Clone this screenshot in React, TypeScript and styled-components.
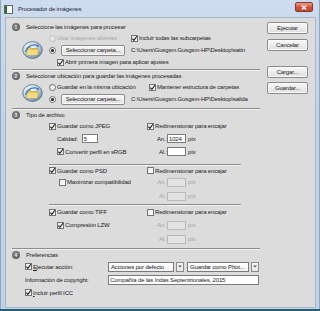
import styled, { createGlobalStyle } from 'styled-components';

const GlobalStyle = createGlobalStyle`
  html, body {
    margin: 0;
    padding: 0;
    background: #245f76;
  }
  body {
    width: 320px;
    height: 311px;
    overflow: hidden;
    font-family: 'Liberation Sans', Arial, sans-serif;
    font-size: 6px;
    letter-spacing: -0.15px;
    color: #1b1b1b;
  }
`;

// pieces

const FolderIcon = () => (
    <svg width="21" height="18" viewBox="0 0 21 18">
        <defs>
            <radialGradient id="globe" cx="40%" cy="35%" r="70%">
                <stop offset="0" stopColor="#ffffff" />
                <stop offset="0.55" stopColor="#c9d8e6" />
                <stop offset="1" stopColor="#5f7f9f" />
            </radialGradient>
        </defs>
        <ellipse cx="10.5" cy="9" rx="9.8" ry="8.4" fill="url(#globe)" stroke="#56708c" strokeWidth="0.8" />
        <path d="M5 6.5 L9 6.5 L10 7.6 L16 7.6 L16 14 L5 14 Z" fill="#e9c252" stroke="#a58424" strokeWidth="0.5" />
        <path d="M5.6 8.8 L16 8.8 L15.2 14 L5 14 Z" fill="#f6dc80" />
        <path d="M3.5 11 C6 4 12 2.5 16.5 5" fill="none" stroke="#3b7fc0" strokeWidth="1.4" />
        <path d="M15 3.4 L17.6 5.3 L14.8 6.4 Z" fill="#3b7fc0" />
    </svg>
);

const Check = () => (
    <svg width="7" height="7" viewBox="0 0 7 7">
        <path d="M1.3 3.6 L2.9 5.3 L5.9 1.2" fill="none" stroke="#1d1d1d" strokeWidth="1.1" />
    </svg>
);

interface BoxProps {
    checked?: boolean;
    disabled?: boolean;
    children?: React.ReactNode;
}

const CheckItem = ({ checked, disabled, children }: BoxProps) => (
    <Item $disabled={disabled}>
        <Box $disabled={disabled}>{checked && <Check />}</Box>
        {children && <span>{children}</span>}
    </Item>
);

const RadioItem = ({ checked, disabled, children }: BoxProps) => (
    <Item $disabled={disabled}>
        <Radio $disabled={disabled}>{checked && <Dot />}</Radio>
        {children && <span>{children}</span>}
    </Item>
);

const SizeField = ({ label, value, disabled }: { label: string; value?: string; disabled?: boolean }) => (
    <Row $disabled={disabled}>
        <SizeLabel>{label}</SizeLabel>
        <Input $w={19} $disabled={disabled}>{value}</Input>
        <Unit>píx</Unit>
    </Row>
);

const Dropdown = ({ text, width }: { text: string; width: number }) => (
    <DropWrap>
        <Select $w={width}>{text}</Select>
        <Arrow>
            <svg width="4" height="3" viewBox="0 0 4 3">
                <path d="M0 0.5 L4 0.5 L2 2.6 Z" fill="#555" />
            </svg>
        </Arrow>
    </DropWrap>
);

const App = () => {
    return (
        <>
            <GlobalStyle />
            <Window>
                <TitleBar>
                    <AppIcon />
                    <Title>Procesador de imágenes</Title>
                    <Close>
                        <svg width="6" height="5" viewBox="0 0 6 5">
                            <path d="M0.8 0.6 L5.2 4.4 M5.2 0.6 L0.8 4.4" stroke="#fff" strokeWidth="1.3" />
                        </svg>
                    </Close>
                </TitleBar>

                <Body>
                    <Main>
                        {/* 1 */}
                        <SectionHead>
                            <Num>1</Num>
                            <span>Seleccione las imágenes para procesar</span>
                        </SectionHead>
                        <PickGrid $rows="12px 12px 12px">
                            <IconCell>
                                <FolderIcon />
                            </IconCell>
                            <Row>
                                <Fixed $w={82}>
                                    <RadioItem disabled>Usar imágenes abiertas</RadioItem>
                                </Fixed>
                                <CheckItem checked>Incluir todas las subcarpetas</CheckItem>
                            </Row>
                            <Row>
                                <RadioItem checked />
                                <Button $w={64} $ml={5}>Seleccionar carpeta...</Button>
                                <Path>C:\Users\Gusgsm.Gusgsm-HP\Desktop\satin</Path>
                            </Row>
                            <Row $indent={8}>
                                <CheckItem checked>Abrir primera imagen para aplicar ajustes</CheckItem>
                            </Row>
                        </PickGrid>
                        <Separator $mt={1} />

                        {/* 2 */}
                        <SectionHead>
                            <Num>2</Num>
                            <span>Seleccionar ubicación para guardar las imágenes procesadas</span>
                        </SectionHead>
                        <PickGrid $rows="12px 12px">
                            <IconCell>
                                <FolderIcon />
                            </IconCell>
                            <Row>
                                <Fixed $w={100}>
                                    <RadioItem>Guardar en la misma ubicación</RadioItem>
                                </Fixed>
                                <CheckItem checked>Mantener estructura de carpetas</CheckItem>
                            </Row>
                            <Row>
                                <RadioItem checked />
                                <Button $w={64} $ml={5}>Seleccionar carpeta...</Button>
                                <Path>C:\Users\Gusgsm.Gusgsm-HP\Desktop\salida</Path>
                            </Row>
                        </PickGrid>
                        <Separator $mt={3} />

                        {/* 3 */}
                        <SectionHead>
                            <Num>3</Num>
                            <span>Tipo de archivo</span>
                        </SectionHead>
                        <FileBlock $rows="12px 13px 13px">
                            <Row>
                                <CheckItem checked>Guardar como JPEG</CheckItem>
                            </Row>
                            <Row>
                                <CheckItem checked>Redimensionar para encajar</CheckItem>
                            </Row>
                            <Row $indent={8}>
                                <span>Calidad:</span>
                                <Input $w={16} $ml={4}>5</Input>
                            </Row>
                            <SizeField label="An.:" value="1024" />
                            <Row $indent={8}>
                                <CheckItem checked>Convertir perfil en sRGB</CheckItem>
                            </Row>
                            <SizeField label="Al.:" />
                        </FileBlock>
                        <SubSeparator $mt={6} />

                        <FileBlock $rows="9px 14px 14px">
                            <Row>
                                <CheckItem checked>Guardar como PSD</CheckItem>
                            </Row>
                            <Row>
                                <CheckItem>Redimensionar para encajar</CheckItem>
                            </Row>
                            <Row $indent={10}>
                                <CheckItem>Maximizar compatibilidad</CheckItem>
                            </Row>
                            <SizeField label="An.:" disabled />
                            <span />
                            <SizeField label="Al.:" disabled />
                        </FileBlock>
                        <SubSeparator $mt={1} />

                        <FileBlock $rows="12px 14px 14px">
                            <Row>
                                <CheckItem checked>Guardar como TIFF</CheckItem>
                            </Row>
                            <Row>
                                <CheckItem>Redimensionar para encajar</CheckItem>
                            </Row>
                            <Row $indent={8}>
                                <CheckItem checked>Compresión LZW</CheckItem>
                            </Row>
                            <SizeField label="An.:" disabled />
                            <span />
                            <SizeField label="Al.:" disabled />
                        </FileBlock>
                        <Separator $mt={2} />

                        {/* 4 */}
                        <SectionHead>
                            <Num>4</Num>
                            <span>Preferencias</span>
                        </SectionHead>
                        <PrefGrid>
                            <CheckItem checked>
                                <u>E</u>jecutar acción:
                            </CheckItem>
                            <Row>
                                <Dropdown text="Acciones por defecto" width={66} />
                                <Dropdown text="Guardar como Phot..." width={62} />
                            </Row>
                            <span>Información de copyright:</span>
                            <Input $w={151} $h={10}>Compañía de las Indas Septentrionales, 2015</Input>
                            <CheckItem checked>
                                <u>I</u>ncluir perfil ICC
                            </CheckItem>
                        </PrefGrid>
                    </Main>

                    <Side>
                        <Button $w={41} $h={12}>Ejecutar</Button>
                        <Button $w={41} $h={12} $mt={5}>Cancelar</Button>
                        <Button $w={41} $h={12} $mt={15}>Cargar...</Button>
                        <Button $w={41} $h={12} $mt={4}>Guardar...</Button>
                    </Side>
                </Body>
            </Window>
        </>
    );
};

export default App;

// STYLES

const Window = styled.div`
    width: 320px;
    height: 309px;
    box-sizing: border-box;
    display: flex;
    flex-direction: column;
    padding: 0 5px 2px 6px;
    background: linear-gradient(180deg, #cddcee 0%, #c0d3e9 40%, #bfd2e8 100%);
    box-shadow: inset 1px 0 0 #8ea6c0, inset -1px 0 0 #8ea6c0;
`;

const TitleBar = styled.div`
    height: 18px;
    flex: none;
    display: flex;
    align-items: center;
    margin-left: -2px;
    padding-right: 2px;
`;

const AppIcon = styled.div`
    width: 7px;
    height: 7px;
    border: 1px solid #5a6f58;
    background: linear-gradient(90deg, #2f6a3a 0 35%, #ffffff 35%);
`;

const Title = styled.span`
    margin-left: 5px;
    color: #1c2a3c;
    font-size: 6px;
`;

const Close = styled.div`
    margin-left: auto;
    width: 16px;
    height: 8px;
    display: flex;
    align-items: center;
    justify-content: center;
    border: 1px solid #8a3a2c;
    border-radius: 2px;
    background: linear-gradient(180deg, #eaa08e 0%, #d3543c 50%, #c4432b 100%);
    margin-top: -4px;
`;

const Body = styled.div`
    flex: 1;
    display: grid;
    grid-template-columns: 248px 41px;
    column-gap: 7px;
    align-items: start;
    padding: 4px 7px 0 6px;
    background: #dcdcdc;
    box-shadow: 0 0 0 1px #a8b7c8;
`;

const Main = styled.div`
    display: flex;
    flex-direction: column;
`;

const Side = styled.div`
    display: flex;
    flex-direction: column;
`;

const SectionHead = styled.div`
    height: 10px;
    display: flex;
    align-items: center;
    gap: 6px;
`;

const Num = styled.div`
    width: 8px;
    height: 8px;
    border-radius: 50%;
    background: radial-gradient(circle at 40% 35%, #8a8a8a, #4e4e4e);
    color: #e8e8e8;
    font-size: 5px;
    font-weight: bold;
    display: flex;
    align-items: center;
    justify-content: center;
    letter-spacing: 0;
`;

const PickGrid = styled.div<{ $rows: string }>`
    display: grid;
    grid-template-columns: 37px 1fr;
    grid-template-rows: ${({ $rows }) => $rows};
`;

const IconCell = styled.div`
    grid-column: 1;
    grid-row: 1 / -1;
    align-self: center;
    padding-left: 10px;
    display: flex;
`;

const Row = styled.div<{ $indent?: number; $disabled?: boolean }>`
    grid-column: auto;
    display: flex;
    align-items: center;
    padding-left: ${({ $indent }) => $indent || 0}px;
    color: ${({ $disabled }) => ($disabled ? '#a3a3a3' : 'inherit')};
    white-space: nowrap;

    ${PickGrid} > & {
        grid-column: 2;
    }
`;

const Fixed = styled.div<{ $w: number }>`
    width: ${({ $w }) => $w}px;
    flex: none;
`;

const Item = styled.label<{ $disabled?: boolean }>`
    display: flex;
    align-items: center;
    gap: 1px;
    color: ${({ $disabled }) => ($disabled ? '#a8a8a8' : 'inherit')};
    white-space: nowrap;
`;

const Box = styled.span<{ $disabled?: boolean }>`
    width: 7px;
    height: 7px;
    box-sizing: border-box;
    border: 1px solid ${({ $disabled }) => ($disabled ? '#b5b5b5' : '#737373')};
    background: linear-gradient(135deg, #e9e9e9, #ffffff);
    display: flex;
    align-items: center;
    justify-content: center;

    svg {
        margin: -1px;
    }
`;

const Radio = styled.span<{ $disabled?: boolean }>`
    width: 7px;
    height: 7px;
    box-sizing: border-box;
    border-radius: 50%;
    border: 1px solid ${({ $disabled }) => ($disabled ? '#bdbdbd' : '#6f6f6f')};
    background: ${({ $disabled }) => ($disabled ? '#e6e6e6' : 'linear-gradient(135deg, #e6e6e6, #ffffff)')};
    display: flex;
    align-items: center;
    justify-content: center;
`;

const Dot = styled.span`
    width: 3px;
    height: 3px;
    border-radius: 50%;
    background: #1f1f1f;
`;

const Button = styled.div<{ $w: number; $h?: number; $ml?: number; $mt?: number }>`
    width: ${({ $w }) => $w}px;
    height: ${({ $h }) => $h || 11}px;
    margin-left: ${({ $ml }) => $ml || 0}px;
    margin-top: ${({ $mt }) => $mt || 0}px;
    box-sizing: border-box;
    flex: none;
    border: 1px solid #8b8b8b;
    border-radius: 2px;
    background: linear-gradient(180deg, #f7f7f7 0%, #ececec 50%, #dedede 100%);
    box-shadow: inset 0 0 0 1px #fbfbfb;
    display: flex;
    align-items: center;
    justify-content: center;
    white-space: nowrap;
`;

const Path = styled.span`
    margin-left: 6px;
`;

const Separator = styled.div<{ $mt: number }>`
    height: 1px;
    margin-top: ${({ $mt }) => $mt}px;
    background: #8c8c8c;
    border-bottom: 1px solid #f2f2f2;
`;

const SubSeparator = styled(Separator)`
    margin-left: 37px;
    width: 192px;
`;

const FileBlock = styled.div<{ $rows: string }>`
    display: grid;
    grid-template-columns: 98px 1fr;
    grid-template-rows: ${({ $rows }) => $rows};
    padding-left: 37px;
`;

const SizeLabel = styled.span`
    width: 20px;
    text-align: right;
    flex: none;
`;

const Input = styled.div<{ $w: number; $h?: number; $ml?: number; $disabled?: boolean }>`
    width: ${({ $w }) => $w}px;
    height: ${({ $h }) => $h || 9}px;
    margin-left: ${({ $ml }) => $ml || 0}px;
    box-sizing: border-box;
    flex: none;
    border: 1px solid ${({ $disabled }) => ($disabled ? '#b9b9b9' : '#7a7a7a')};
    background: ${({ $disabled }) => ($disabled ? '#e3e3e3' : '#ffffff')};
    color: #1b1b1b;
    padding: 0 1px;
    display: flex;
    align-items: center;
    white-space: nowrap;
    overflow: hidden;
`;

const Unit = styled.span`
    margin-left: 2px;
`;

const PrefGrid = styled.div`
    display: grid;
    grid-template-columns: 83px 1fr;
    grid-template-rows: 13px 13px 13px;
    align-items: center;
    padding-left: 13px;
    white-space: nowrap;
`;

const DropWrap = styled.div`
    display: flex;
    align-items: center;
    gap: 2px;
    margin-right: 3px;
`;

const Select = styled.div<{ $w: number }>`
    width: ${({ $w }) => $w}px;
    height: 10px;
    box-sizing: border-box;
    border: 1px solid #7a7a7a;
    background: linear-gradient(180deg, #ffffff, #f1f1f1);
    padding: 0 2px;
    display: flex;
    align-items: center;
    overflow: hidden;
`;

const Arrow = styled.div`
    width: 8px;
    height: 10px;
    box-sizing: border-box;
    border: 1px solid #8a8a8a;
    background: linear-gradient(180deg, #fafafa, #e6e6e6);
    display: flex;
    align-items: center;
    justify-content: center;
`;
